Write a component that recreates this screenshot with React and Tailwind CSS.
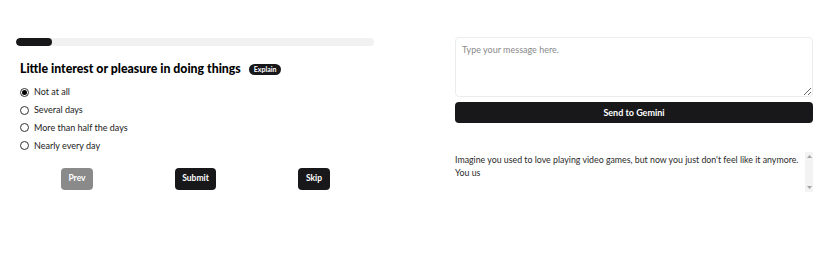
import { useState } from 'react'

const options = ['Not at all', 'Several days', 'More than half the days', 'Nearly every day']

export default function App() {
    const [answer, setAnswer] = useState(0)

    return (
        <div className="w-[828px] h-[275px] bg-white pl-4 pr-[15px] pt-[37px] grid grid-cols-2 gap-[81px] items-start text-[#1a1a1a]" style={{ fontFamily: 'Lato, "Open Sans", sans-serif' }}>
            {/* Question */}
            <div className="flex flex-col">
                <div className="h-[8px] mt-px rounded-full bg-[#f1f1f1] overflow-hidden">
                    <div className="h-full w-[10%] rounded-full bg-[#18181b]" />
                </div>

                <div className="flex items-center gap-2 mt-[14px] pl-1">
                    <h2 className="text-[12.3px] font-black text-black">Little interest or pleasure in doing things</h2>
                    <span className="bg-[#18181b] text-white text-[7px] font-bold rounded-full px-[5px] py-[1.5px] leading-[8px]">Explain</span>
                </div>

                <ul className="mt-[8px] pl-1 flex flex-col gap-[5.7px]">
                    {options.map((opt, i) => (
                        <li key={opt}>
                            <label className="flex items-center gap-[5px] text-[9px] leading-[12px] cursor-pointer">
                                <span className="w-[9px] h-[9px] rounded-full border border-[#333] flex items-center justify-center bg-white">
                                    {answer === i && <span className="w-[5px] h-[5px] rounded-full bg-black" />}
                                </span>
                                <input type="radio" name="q" className="hidden" checked={answer === i} onChange={() => setAnswer(i)} />
                                {opt}
                            </label>
                        </li>
                    ))}
                </ul>

                <div className="flex gap-[82px] pl-[45px] mt-[16px]">
                    <button className="h-[22px] w-[32px] rounded bg-[#8a8a8a] text-white text-[8.5px] font-bold">Prev</button>
                    <button className="h-[22px] w-[41px] rounded bg-[#18181b] text-white text-[8.5px] font-bold">Submit</button>
                    <button className="h-[22px] w-[32px] rounded bg-[#18181b] text-white text-[8.5px] font-bold">Skip</button>
                </div>
            </div>

            {/* Chat */}
            <div className="flex flex-col">
                <textarea
                    placeholder="Type your message here."
                    className="h-[60px] w-full rounded border border-[#ececec] px-[6px] py-[5px] text-[9px] placeholder-[#8a8a8a] outline-none"
                />
                <button className="mt-[5px] h-[21px] w-full rounded bg-[#18181b] text-white text-[9px] font-bold">Send to Gemini</button>

                {/* Response with scrollbar */}
                <div className="mt-[29px] h-[40px] flex">
                    <div className="flex-1 overflow-hidden text-[8.8px] leading-[13px] text-[#2a2a2a] pt-[1px]">
                        Imagine you used to love playing video games, but now you just don't feel like it anymore. You us
                    </div>
                    <div className="w-[8px] ml-[1px] bg-[#f3f3f3] flex flex-col justify-between items-center py-[3px]">
                        <svg width="5" height="3" viewBox="0 0 5 3"><path d="M2.5 0L5 3H0z" fill="#a3a3a3" /></svg>
                        <svg width="5" height="3" viewBox="0 0 5 3"><path d="M0 0h5L2.5 3z" fill="#a3a3a3" /></svg>
                    </div>
                </div>
            </div>
        </div>
    )
}
